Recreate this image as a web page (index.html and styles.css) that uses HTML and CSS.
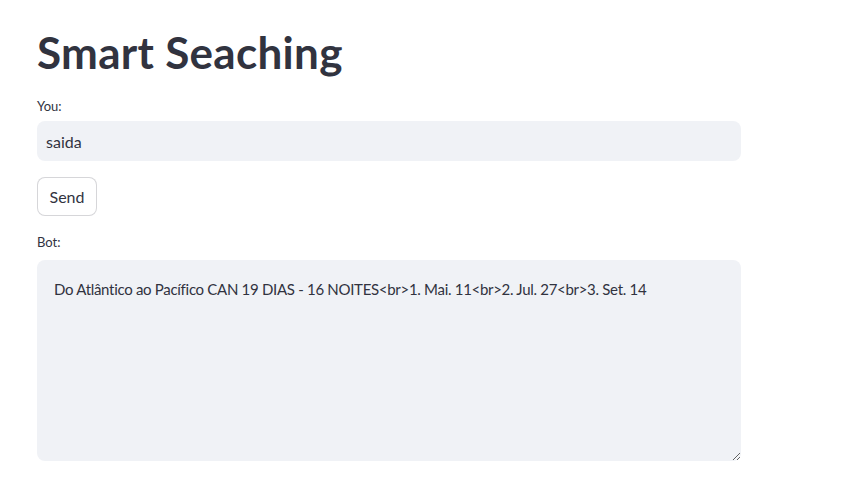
FILE: index.html
```html
<!DOCTYPE html>
<html>
<head>
<meta charset="utf-8">
<link rel="stylesheet" href="styles.css">
</head>
<body>
<main class="main">
  <h1 class="title">Smart Seaching</h1>
  <div class="field">
    <label class="label">You:</label>
    <div class="input">saida</div>
  </div>
  <button class="btn">Send</button>
  <div class="field">
    <label class="label label-area">Bot:</label>
    <textarea class="area">Do Atlântico ao Pacífico CAN 19 DIAS - 16 NOITES&lt;br&gt;1. Mai. 11&lt;br&gt;2. Jul. 27&lt;br&gt;3. Set. 14</textarea>
  </div>
</main>
</body>
</html>
```

FILE: styles.css
```css
html, body {
  margin: 0;
  padding: 0;
  background: #ffffff;
}
body {
  font-family: "Lato", "Noto Sans", sans-serif;
  color: rgb(49, 51, 63);
}
.main {
  width: 704px;
  padding: 24px 0 0 37px;
  display: flex;
  flex-direction: column;
}
.title {
  margin: 0;
  font-size: 44px;
  font-weight: 700;
  line-height: 56px;
  letter-spacing: 0.3px;
  color: rgb(49, 51, 63);
}
.field {
  display: flex;
  flex-direction: column;
}
.label {
  font-size: 13px;
  line-height: 16px;
  margin-top: 18px;
  margin-bottom: 7px;
}
.label-area {
  margin-bottom: 10px;
}
.input {
  height: 40px;
  box-sizing: border-box;
  background: rgb(240, 242, 246);
  border-radius: 8px;
  padding: 0 9px;
  display: flex;
  align-items: center;
  font-size: 16px;
}
.btn {
  align-self: flex-start;
  margin-top: 16px;
  width: 60px;
  height: 39px;
  background: #fff;
  border: 1px solid rgba(49, 51, 63, 0.2);
  border-radius: 8px;
  font-family: inherit;
  font-size: 16px;
  color: rgb(49, 51, 63);
  padding: 0;
}
.area {
  box-sizing: border-box;
  height: 201px;
  width: 704px;
  background: rgb(240, 242, 246);
  border: none;
  border-radius: 8px;
  padding: 18px 17px;
  font-family: inherit;
  font-size: 15px;
  letter-spacing: -0.3px;
  line-height: 22px;
  color: rgb(49, 51, 63);
  resize: vertical;
  outline: none;
}
```
